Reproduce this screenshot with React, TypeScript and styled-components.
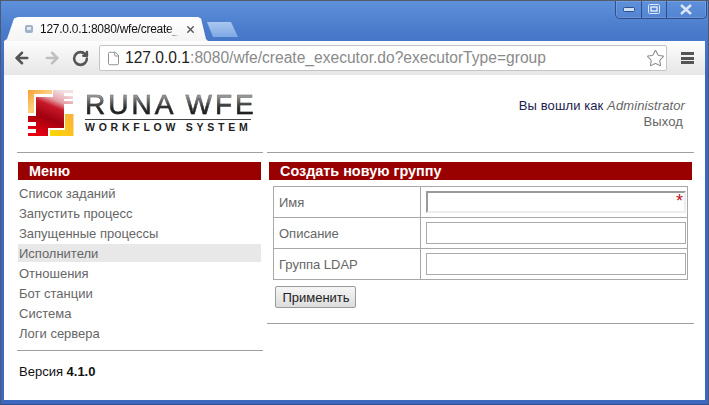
import React from "react";
import styled, { createGlobalStyle } from "styled-components";
import { ArrowLeft, ArrowRight, RotateCw, Star, File, X } from "lucide-react";

const Global = createGlobalStyle`
  html, body { margin: 0; padding: 0; background: #3f6dc0; }
  body { font-family: "Liberation Sans", Arial, sans-serif; overflow: hidden; }
  * { box-sizing: border-box; }
`;

const Frame = styled.div`
  width: 709px; height: 405px; display: flex; flex-direction: column;
  padding: 1px 3px 4px 3px; position: relative;
  background: linear-gradient(#5f90da 0, #4a7bcb 30px, #3c69be 75px, #3c69be 100%);
  border: 1px solid #4a5a78; border-bottom-color: #2f4f8f; border-top-color: #555c68;
`;
const Controls = styled.div`
  position: absolute; top: 0; right: 1px; width: 92px; height: 18px; display: flex;
  border: 1px solid #2e4f8c; border-top: 0; border-radius: 0 0 5px 5px;
  box-shadow: 0 0 0 0.5px rgba(255,255,255,.25) inset;
`;
const ControlBtn = styled.div<{ $w: number }>`
  width: ${p => p.$w}px; display: flex; align-items: center; justify-content: center;
  & + & { border-left: 1px solid #2e4f8c; }
`;
const TabStrip = styled.div`
  flex: 0 0 39px; display: flex; align-items: flex-end; padding-top: 15px;
`;
const Tab = styled.div`
  width: 204px; height: 24px; background: linear-gradient(#fff, #f4f4f4); display: flex; align-items: center;
  padding-left: 20px; gap: 6px;
  clip-path: polygon(0 100%, 3px 92%, 10px 6%, 14px 0, 194px 0, 197px 6%, 202px 92%, 204px 100%);
`;
const TabTitle = styled.span`
  width: 139px; white-space: nowrap; font-size: 12px; color: #111; letter-spacing: -0.25px;
  -webkit-mask-image: linear-gradient(90deg, #000 92%, transparent);
  mask-image: linear-gradient(90deg, #000 92%, transparent);
`;
const NewTab = styled.div`
  width: 31px; height: 15px; margin: 0 0 4px -1px;
  background: linear-gradient(#a9c8f0, #7fa8e4);
  clip-path: polygon(0 0, 24px 0, 31px 100%, 6px 100%);
`;
const Toolbar = styled.div`
  flex: 0 0 34px; display: flex; align-items: center; padding: 0 9px 0 9px;
  background: linear-gradient(#fdfdfd, #e6e6e6);
`;
const NavButton = styled.div<{ $w: number }>`
  width: ${p => p.$w}px; display: flex; align-items: center; color: #555;
`;
const Omnibox = styled.div`
  width: 568px; height: 26px; background: #fff; border: 1px solid #c4c4c4; border-radius: 2px;
  display: flex; align-items: center; padding: 0 1px 0 6px; gap: 4px;
`;
const Url = styled.div`
  flex: 1; font-size: 15.6px; color: #8a8a8a; white-space: nowrap;
`;
const Host = styled.span` color: #222; `;
const MenuIcon = styled.div`
  margin-left: 14px; width: 13px; height: 12px; display: flex; flex-direction: column; justify-content: space-between;
`;
const MenuLine = styled.div` height: 3px; background: #555; `;
const Page = styled.div`
  flex: 1; background: #fff; padding: 0 0 0 13px; display: flex; flex-direction: column;
`;
const Head = styled.div`
  height: 77px; display: flex; justify-content: space-between; padding: 15px 20px 0 11px;
`;
const LogoBox = styled.div` display: flex; gap: 11px; width: 226px; `;
const LogoText = styled.div` display: flex; flex-direction: column; margin-top: -1px; `;
const LogoTitle = styled.div`
  font-size: 28px; line-height: 32px; height: 30px; letter-spacing: 3px; white-space: nowrap;
  background: linear-gradient(#aaa 18%, #2a2a2a 62%, #111);
  -webkit-background-clip: text; background-clip: text; color: transparent;
  -webkit-text-stroke: 0.5px rgba(50,50,50,.55);
`;
const LogoSub = styled.div`
  border-top: 1px solid #444; width: 166px; font-size: 10.5px; line-height: 12px; font-weight: bold; color: #222;
  letter-spacing: 3.75px; white-space: nowrap; padding-top: 1px;
`;
const User = styled.div`
  display: flex; flex-direction: column; align-items: flex-end; font-size: 13px; line-height: 16px; padding-top: 8px; color: #1c1c50;
  letter-spacing: 0.1px;
`;
const Admin = styled.i` color: #666; `;
const Logout = styled.div` color: #666; padding-right: 2px; `;
const Columns = styled.div`
  display: grid; grid-template-columns: 246px 427px; column-gap: 4px;
`;
const Rule = styled.div`
  height: 1px; margin-bottom: 1px; background: #a0a0a0;
`;
const Column = styled.div` display: flex; flex-direction: column; `;
const Bar = styled.div<{ $pad: number; $l: number; $r: number }>`
  height: 18px; margin: 8px ${p => p.$r}px 0 ${p => p.$l}px; background: #990000; color: #fff; font-weight: bold;
  font-size: 14.4px; line-height: 18px; padding-left: ${p => p.$pad}px; white-space: nowrap;
`;
const MenuList = styled.div` display: flex; flex-direction: column; margin: 3px 2px 0 1px; `;
const MenuItem = styled.div<{ $on?: boolean }>`
  height: 20px; font-size: 13px; line-height: 22px; padding-left: 1px; color: #666;
  background: ${p => p.$on ? "linear-gradient(#fff 0, #fff 1px, #e8e8e8 1px, #e8e8e8 19px, #fff 19px)" : "transparent"};
`;
const MenuRule = styled(Rule)` margin-top: 7px; `;
const Version = styled.div` font-size: 13px; line-height: 16px; margin: 12px 0 0 2px; color: #111; `;
const FormTable = styled.table`
  border-collapse: collapse; margin: 6px 0 0 6px; width: 415px; table-layout: fixed;
`;
const Row = styled.tr` height: 31px; `;
const LabelCell = styled.td`
  width: 147px; border: 1px solid #a8a8a8; padding: 0 0 0 5px; font-size: 13px; color: #666;
`;
const FieldCell = styled.td`
  border: 1px solid #a8a8a8; padding: 0 0 0 5px;
`;
const Field = styled.div<{ $req?: boolean }>`
  width: 260px; height: 22px; background: #fff; position: relative;
  border-style: solid; border-color: ${p => p.$req ? "#9a9a9a #ededed #ededed #9a9a9a" : "#aaa"};
  border-width: ${p => p.$req ? "2px" : "1px"};
`;
const Required = styled.span`
  position: absolute; top: 1px; right: 1px; color: #c01025; font-size: 18px; line-height: 14px;
`;
const Apply = styled.button`
  display: block; width: 81px; height: 22px; margin: 6px 0 0 8px; padding: 0 0 0 1px; font: 13px "Liberation Sans", Arial, sans-serif;
  color: #222; border: 1px solid #9a9a9a; border-radius: 2px; background: linear-gradient(#f6f6f6, #dcdcdc);
`;
const BottomRule = styled(Rule)` margin-top: 15px; `;

const Logo = () => (
  <svg width="46" height="46" viewBox="0 0 46 46" style={{ flex: "none" }}>
    <defs>
      <linearGradient id="r" x1="0.7" y1="0" x2="0.3" y2="1">
        <stop offset="0" stopColor="#f4dfe2" />
        <stop offset="0.22" stopColor="#e4a0a8" />
        <stop offset="0.36" stopColor="#c81828" />
        <stop offset="0.62" stopColor="#a00010" />
        <stop offset="1" stopColor="#e80010" />
      </linearGradient>
      <linearGradient id="o" x1="0" y1="0" x2="1" y2="1">
        <stop offset="0" stopColor="#f5a030" />
        <stop offset="0.5" stopColor="#fbd080" />
        <stop offset="1" stopColor="#f0a020" />
      </linearGradient>
      <linearGradient id="o2" x1="1" y1="0" x2="0" y2="1">
        <stop offset="0" stopColor="#f8b040" />
        <stop offset="1" stopColor="#ffd800" />
      </linearGradient>
    </defs>
    <path d="M0 0H24V4H6V23H0Z" fill="url(#o)" />
    <path d="M37 24H45.5V46H22V40H37Z" fill="url(#o2)" />
    <path d="M8 7H25V0H45V3H36V6H45V9H36V11H45V14H36V38H20V46H0V43H8V39H0V36H8V32H0V26H8Z" fill="url(#r)" />
  </svg>
);

export default function App() {
  return (
    <>
      <Global />
      <Frame>
        <Controls>
          <ControlBtn $w={26}>
            <svg width="12" height="6"><rect x="0.5" y="0.5" width="11" height="4" rx="1" fill="#cfe0f5" stroke="#2e4f8c" /></svg>
          </ControlBtn>
          <ControlBtn $w={25}>
            <svg width="12" height="11"><rect x="0.5" y="0.5" width="11" height="9" rx="1" fill="none" stroke="#dbe7f7" /><rect x="3" y="3" width="6" height="4" fill="none" stroke="#dbe7f7" strokeWidth="1.5" /></svg>
          </ControlBtn>
          <ControlBtn $w={41}>
            <svg width="12" height="11"><path d="M1 1L11 10M11 1L1 10" stroke="#dbe7f7" strokeWidth="2.4" /></svg>
          </ControlBtn>
        </Controls>
        <TabStrip>
          <Tab>
            <svg width="10" height="10" style={{ flex: "none" }}><rect x="1" y="1" width="8" height="8" rx="2" fill="#9fb2c8" /><rect x="3" y="3" width="4" height="3" fill="#e4eaf0" /></svg>
            <TabTitle>127.0.0.1:8080/wfe/create_</TabTitle>
            <X size={11} strokeWidth={3} color="#555" style={{ flex: "none" }} />
          </Tab>
          <NewTab />
        </TabStrip>
        <Toolbar>
          <NavButton $w={30}><ArrowLeft size={18} strokeWidth={3.4} /></NavButton>
          <NavButton $w={29}><ArrowRight size={18} strokeWidth={3.4} color="#c0c0c0" /></NavButton>
          <NavButton $w={27}><RotateCw size={17} strokeWidth={3.6} /></NavButton>
          <Omnibox>
            <File size={15} color="#8a8a8a" strokeWidth={1.5} style={{ flex: "none" }} />
            <Url><Host>127.0.0.1</Host>:8080/wfe/create_executor.do?executorType=group</Url>
            <Star size={19} color="#8a8a8a" strokeWidth={1.3} style={{ flex: "none" }} />
          </Omnibox>
          <MenuIcon><MenuLine /><MenuLine /><MenuLine /></MenuIcon>
        </Toolbar>
        <Page>
          <Head>
            <LogoBox>
              <Logo />
              <LogoText>
                <LogoTitle>RUNA WFE</LogoTitle>
                <LogoSub>WORKFLOW SYSTEM</LogoSub>
              </LogoText>
            </LogoBox>
            <User>
              <div>Вы вошли как <Admin>Administrator</Admin></div>
              <Logout>Выход</Logout>
            </User>
          </Head>
          <Columns>
            <Column>
              <Rule />
              <Bar $pad={11} $l={1} $r={2}>Меню</Bar>
              <MenuList>
                <MenuItem>Список заданий</MenuItem>
                <MenuItem>Запустить процесс</MenuItem>
                <MenuItem>Запущенные процессы</MenuItem>
                <MenuItem $on>Исполнители</MenuItem>
                <MenuItem>Отношения</MenuItem>
                <MenuItem>Бот станции</MenuItem>
                <MenuItem>Система</MenuItem>
                <MenuItem>Логи сервера</MenuItem>
              </MenuList>
              <MenuRule />
              <Version>Версия <b>4.1.0</b></Version>
            </Column>
            <Column>
              <Rule />
              <Bar $pad={11} $l={2} $r={2}>Создать новую группу</Bar>
              <FormTable>
                <tbody>
                  <Row><LabelCell>Имя</LabelCell><FieldCell><Field $req><Required>*</Required></Field></FieldCell></Row>
                  <Row><LabelCell>Описание</LabelCell><FieldCell><Field /></FieldCell></Row>
                  <Row><LabelCell>Группа LDAP</LabelCell><FieldCell><Field /></FieldCell></Row>
                </tbody>
              </FormTable>
              <Apply>Применить</Apply>
              <BottomRule />
            </Column>
          </Columns>
        </Page>
      </Frame>
    </>
  );
}
